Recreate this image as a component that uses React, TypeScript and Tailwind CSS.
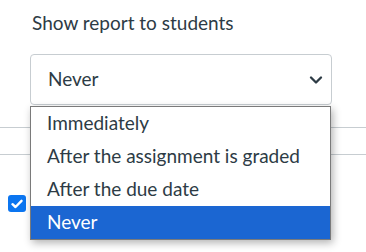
import { ChevronDown } from 'lucide-react'

const options = ['Immediately', 'After the assignment is graded', 'After the due date', 'Never']

export default function App() {
  return (
    <div className="relative h-[252px] w-[366px] overflow-hidden bg-white font-['Lato',sans-serif] text-[19px] text-[#2d3b45]">
      <div className="pl-[32px] pt-[8px] leading-[30px]">Show report to students</div>

      <div className="ml-[30px] mt-[16px] flex h-[51px] w-[302px] items-center justify-between rounded-[4px] border border-[#c7cdd1] pl-[17px] pr-[5px]">
        <span>Never</span>
        <ChevronDown size={20} strokeWidth={2.8} />
      </div>

      <div className="mt-[22px] border-t border-[#c7cdd1]" />
      <div className="mt-[26px] border-t border-[#c7cdd1]" />

      <div className="ml-[8px] mt-[40px] flex h-[17px] w-[18px] items-center justify-center rounded-[3px] bg-[#0b75f0]">
        <svg width="12" height="10" viewBox="0 0 12 10" fill="none">
          <path d="M1.5 5.2 4.5 8 10.5 1.8" stroke="white" strokeWidth="2.4" strokeLinecap="round" strokeLinejoin="round" />
        </svg>
      </div>

      <ul className="absolute left-[30px] top-[106px] w-[301px] border border-[#7a7a7a] bg-white shadow-[2px_3px_8px_rgba(0,0,0,0.3)]">
        {options.map((o) => (
          <li
            key={o}
            className={
              o === 'Never'
                ? 'flex h-[33px] items-center bg-[#1b66d2] pl-[16px] text-white'
                : 'flex h-[33px] items-center pl-[16px]'
            }
          >
            {o}
          </li>
        ))}
      </ul>
    </div>
  )
}
